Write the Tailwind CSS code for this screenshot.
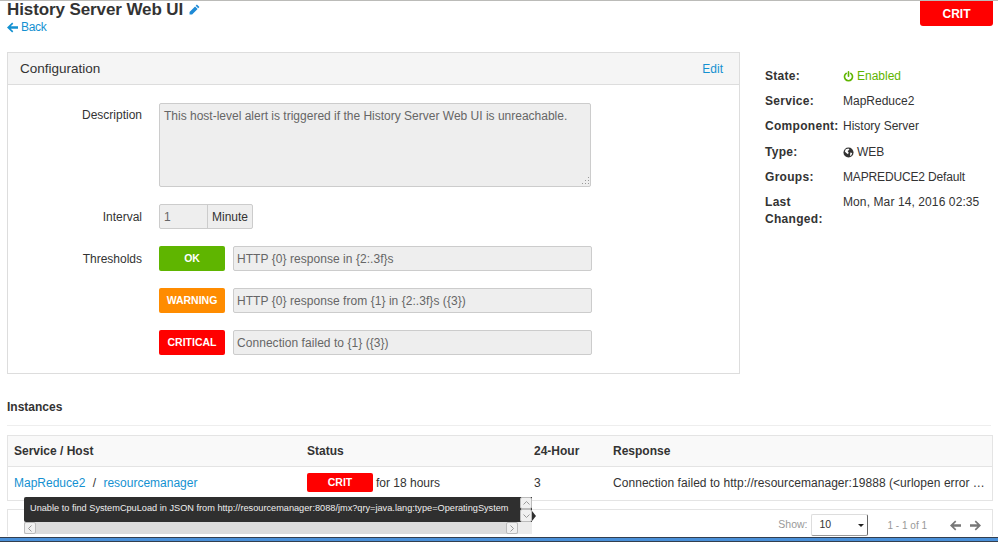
<!DOCTYPE html>
<html lang="en">
<head>
    <meta charset="UTF-8">
    <title>History Server Web UI</title>
    <script src="https://cdn.jsdelivr.net/npm/@tailwindcss/browser@4"></script>
</head>
<body class="relative h-[543px] w-[998px] overflow-hidden bg-white font-['Liberation_Sans',Arial,sans-serif] text-[12px] text-[#333]">

    <div class="h-px bg-[#bbbbb8]"></div>

    <!-- Title row -->
    <div class="flex h-[51px] justify-between pl-[7px] pr-[5px]">
        <div>
            <h1 class="flex h-[17px] items-center gap-[6px] text-[17px] leading-[17px] font-bold tracking-[-0.1px]">
                History Server Web UI
                <svg class="h-[11px] w-[11px]" viewBox="0 0 12 12" fill="#1e8ad6"><path d="M8.6.6l2.8 2.8-1.3 1.3-2.8-2.8zM6.6 2.6l2.8 2.8-6 6H.6V8.6z"/></svg>
            </h1>
            <a class="flex h-[18px] items-center gap-[3px] tracking-[-0.3px] text-[#1491d1]">
                <svg class="h-[11px] w-[11px]" viewBox="0 0 10 10" fill="#1491d1"><path d="M4.7.5l1 1L3.4 3.9H10v2.2H3.4l2.3 2.4-1 1L0 5z"/></svg>
                Back
            </a>
        </div>
        <div class="flex h-[25px] w-[73px] items-center justify-center rounded-b-[3px] bg-[#ff0000] text-[12px] font-bold text-white">CRIT</div>
    </div>

    <!-- Configuration and summary -->
    <div class="flex pl-[7px]">
        <div class="h-[322px] w-[733px] border border-[#dddddd]">
            <div class="flex h-[32px] items-center justify-between border-b border-[#dddddd] bg-[#f5f5f5] pl-[12px] pr-[16px]">
                <span class="pt-[1px] text-[13.5px]">Configuration</span>
                <a class="text-[#1491d1]">Edit</a>
            </div>
            <div class="flex flex-col pt-[18px]">
                <div class="flex">
                    <div class="w-[134px] pt-[3px] text-right">Description</div>
                    <div class="relative ml-[17px] h-[84px] w-[432px] rounded-[2px] border border-[#cccccc] bg-[#eeeeee] px-[4px] py-[3px] text-[#666]">
                        This host-level alert is triggered if the History Server Web UI is unreachable.
                        <svg class="absolute right-0 bottom-0 h-[10px] w-[10px]" viewBox="0 0 10 10" fill="#999"><path d="M8 1h1v1H8zM5 4h1v1H5zM8 4h1v1H8zM2 7h1v1H2zM5 7h1v1H5zM8 7h1v1H8z"/></svg>
                    </div>
                </div>
                <div class="mt-[17px] flex items-center">
                    <div class="w-[134px] text-right">Interval</div>
                    <div class="ml-[17px] flex h-[25px] w-[94px] rounded-[2px] border border-[#cccccc] bg-[#eeeeee]">
                        <span class="flex w-[48px] items-center border-r border-[#cccccc] pl-[4px] text-[#666]">1</span>
                        <span class="flex items-center pl-[4px]">Minute</span>
                    </div>
                </div>
                <div class="mt-[17px] flex items-center">
                    <div class="w-[134px] text-right">Thresholds</div>
                    <div class="ml-[17px] flex h-[25px] w-[66px] items-center justify-center rounded-[2px] bg-[#5fb500] text-[10.5px] font-bold text-white">OK</div>
                    <div class="ml-[8px] flex h-[25px] w-[359px] items-center rounded-[2px] border border-[#cccccc] bg-[#eeeeee] pl-[3px] tracking-[0.05px] text-[#666]">HTTP {0} response in {2:.3f}s</div>
                </div>
                <div class="mt-[17px] flex items-center">
                    <div class="ml-[151px] flex h-[25px] w-[66px] items-center justify-center rounded-[2px] bg-[#ff8c00] text-[10.5px] font-bold text-white">WARNING</div>
                    <div class="ml-[8px] flex h-[25px] w-[359px] items-center rounded-[2px] border border-[#cccccc] bg-[#eeeeee] pl-[3px] tracking-[0.05px] text-[#666]">HTTP {0} response from {1} in {2:.3f}s ({3})</div>
                </div>
                <div class="mt-[17px] flex items-center">
                    <div class="ml-[151px] flex h-[25px] w-[66px] items-center justify-center rounded-[2px] bg-[#ff0000] text-[10.5px] font-bold text-white">CRITICAL</div>
                    <div class="ml-[8px] flex h-[25px] w-[359px] items-center rounded-[2px] border border-[#cccccc] bg-[#eeeeee] pl-[3px] tracking-[0.05px] text-[#666]">Connection failed to {1} ({3})</div>
                </div>
            </div>
        </div>

        <div class="ml-[25px] grid grid-cols-[78px_1fr] content-start gap-y-[8.2px] pt-[16px] leading-[17px]">
            <div class="font-bold tracking-[0.3px]">State:</div>
            <div class="flex items-center gap-[3px] text-[#5fb500]">
                <svg class="h-[11px] w-[11px]" viewBox="0 0 12 12" fill="none" stroke="#5fb500" stroke-width="1.8" stroke-linecap="round"><path d="M3.5 2.6a4.4 4.4 0 1 0 5 0M6 1v4.6"/></svg>
                Enabled
            </div>
            <div class="font-bold tracking-[0.3px]">Service:</div>
            <div>MapReduce2</div>
            <div class="font-bold tracking-[0.3px]">Component:</div>
            <div>History Server</div>
            <div class="font-bold tracking-[0.3px]">Type:</div>
            <div class="flex items-center gap-[3px]">
                <svg class="h-[11px] w-[11px]" viewBox="0 0 12 12"><circle cx="6" cy="6" r="5.5" fill="#333"/><path d="M3 2.5l3-.8 1 1.3-2 1.4 1.2 1.6-.7 2L3.6 6.5 2 5zM8 6l2 .5-.8 2.4-1.6 1z" fill="#fff"/></svg>
                WEB
            </div>
            <div class="font-bold tracking-[0.3px]">Groups:</div>
            <div class="tracking-[-0.15px]">MAPREDUCE2 Default</div>
            <div class="font-bold tracking-[0.3px]">Last Changed:</div>
            <div class="tracking-[0.1px]">Mon, Mar 14, 2016 02:35</div>
        </div>
    </div>

    <!-- Instances -->
    <div class="px-[7px]">
        <div class="mt-[24px] h-[28px] border-b border-[#eeeeee] font-bold">Instances</div>
        <div class="mt-[9px] w-[986px] border border-[#e4e4e4]">
            <div class="grid h-[31px] grid-cols-[293px_227px_79px_1fr] items-center border-b border-[#e4e4e4] bg-[#f9f9f9] pl-[6px] font-bold">
                <div>Service / Host</div>
                <div>Status</div>
                <div>24-Hour</div>
                <div>Response</div>
            </div>
            <div class="grid h-[33px] grid-cols-[293px_227px_79px_1fr] items-center pb-[2px] pl-[6px]">
                <div class="text-[#1491d1]">MapReduce2 <span class="mx-[4px] text-[#333]">/</span> resourcemanager</div>
                <div class="flex items-center gap-[3px]">
                    <span class="flex h-[19px] w-[66px] items-center justify-center rounded-[2px] bg-[#ff0000] text-[10.5px] font-bold text-white">CRIT</span>
                    for 18 hours
                </div>
                <div>3</div>
                <div class="tracking-[0.05px] whitespace-nowrap">Connection failed to http://resourcemanager:19888 (&lt;urlopen error …</div>
            </div>
        </div>
        <div class="mt-[8px] flex h-[27px] w-[986px] items-center justify-end border-x border-t border-[#e4e4e4] pt-[4px] pr-[11px] text-[10px] text-[#999]">
            <span class="text-[10.5px]">Show:</span>
            <div class="ml-[3px] flex h-[22px] w-[57px] items-center justify-between rounded-[2px] border border-[#dddddd] border-r-[#666] border-b-[#999] pl-[8px] pr-[3px] text-[10.5px] text-[#333]">
                10
                <svg class="h-[3px] w-[6px]" viewBox="0 0 6 3" fill="#222"><path d="M0 0h6L3 3z"/></svg>
            </div>
            <span class="ml-[20px]">1 - 1 of 1</span>
            <svg class="ml-[23px] h-[11px] w-[11px]" viewBox="0 0 10 10" fill="#777"><path d="M4.7.5l1 1L3.4 3.9H10v2.2H3.4l2.3 2.4-1 1L0 5z"/></svg>
            <svg class="ml-[9px] h-[11px] w-[11px]" viewBox="0 0 10 10" fill="#777"><path d="M5.3.5l-1 1 2.3 2.4H0v2.2h6.6L4.3 8.5l1 1L10 5z"/></svg>
        </div>
    </div>

    <!-- Tooltip with scrollbars -->
    <div class="absolute top-[497px] left-[24px] h-[37px] w-[508px] bg-[#ececec]">
        <div class="flex h-[25px]">
            <div class="flex w-[496px] items-center rounded-l-[2px] bg-[#2f2f2f] pb-[2px] pl-[6px] text-[9.2px] whitespace-nowrap text-[#eeeeee]">Unable to find SystemCpuLoad in JSON from http://resourcemanager:8088/jmx?qry=java.lang:type=OperatingSystem</div>
            <div class="flex w-[12px] flex-col bg-[#2f2f2f]">
                <div class="flex h-[12px] items-center justify-center rounded-[2px] border border-[#bbb] bg-[#f0f0f0]"><svg class="h-[4px] w-[7px]" viewBox="0 0 7 4" fill="none" stroke="#999"><path d="M.5 3.5l3-3 3 3"/></svg></div>
                <div class="flex h-[13px] items-center justify-center rounded-[2px] border border-[#bbb] bg-[#f0f0f0]"><svg class="h-[4px] w-[7px]" viewBox="0 0 7 4" fill="none" stroke="#999"><path d="M.5.5l3 3 3-3"/></svg></div>
            </div>
        </div>
        <div class="flex h-[12px] w-[494px] items-center justify-between bg-[#dcdcdc]">
            <div class="flex h-[12px] w-[12px] items-center justify-center rounded-[2px] border border-[#bbb] bg-[#f0f0f0]"><svg class="h-[7px] w-[4px]" viewBox="0 0 4 7" fill="none" stroke="#999"><path d="M3.5.5l-3 3 3 3"/></svg></div>
            <div class="flex h-[12px] w-[12px] items-center justify-center rounded-[2px] border border-[#bbb] bg-[#f0f0f0]"><svg class="h-[7px] w-[4px]" viewBox="0 0 4 7" fill="none" stroke="#999"><path d="M.5.5l3 3-3 3"/></svg></div>
        </div>
        <div class="absolute top-[14px] -right-[4px] h-0 w-0 border-y-[5px] border-l-[4px] border-y-transparent border-l-[#2f2f2f]"></div>
    </div>

    <!-- Bottom bar -->
    <div class="absolute inset-x-0 top-[537px] h-[5px] border-y border-[#333f4f] bg-[#4a90d9]"></div>
</body>
</html>
